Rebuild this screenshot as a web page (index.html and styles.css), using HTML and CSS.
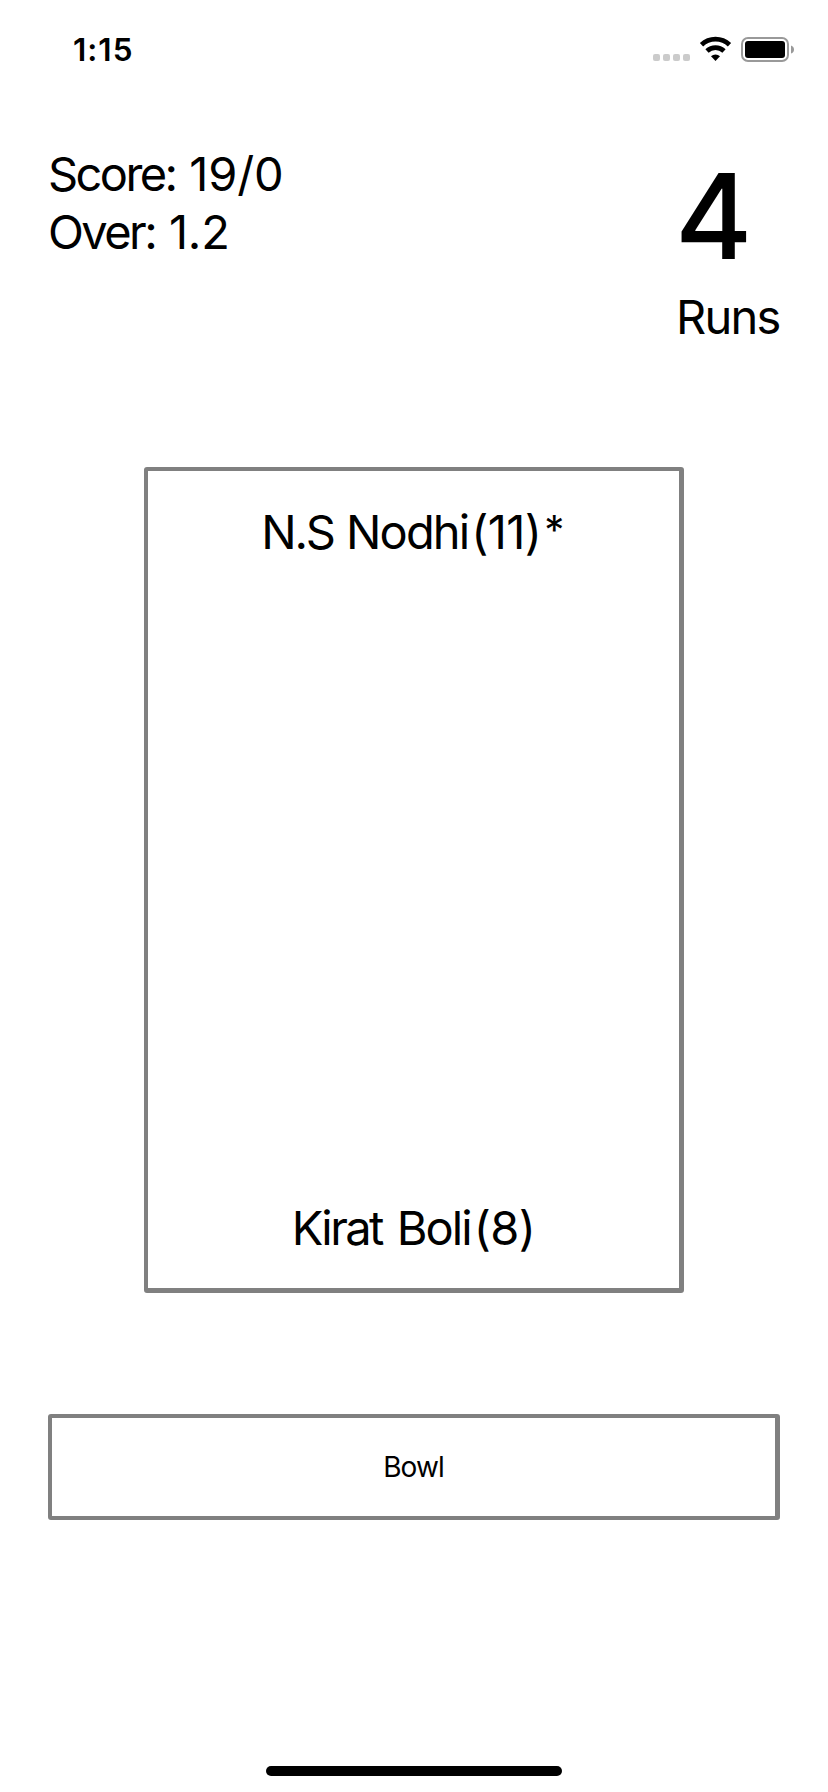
FILE: index.html
```html
<!DOCTYPE html>
<html lang="en">
<head>
<meta charset="utf-8">
<title>Cricket</title>
<link rel="stylesheet" href="styles.css">
</head>
<body>
<div class="screen">
  <header class="status">
    <span class="time">1:15</span>
    <svg class="indicators" width="144" height="32" viewBox="0 0 144 32">
      <g fill="#cbcbcb"><rect x="1" y="20" width="7" height="7" rx="2"/><rect x="11" y="20" width="7" height="7" rx="2"/><rect x="21" y="20" width="7" height="7" rx="2"/><rect x="31" y="20" width="7" height="7" rx="2"/></g>
      <path d="M49.500 10.700a20.500 20.500 0 0 1 28 0M55 17a12.500 12.500 0 0 1 17 0" fill="none" stroke="#000" stroke-width="4.800"/>
      <path d="M59 22.300a6.500 6.500 0 0 1 9 0L63.500 27z"/>
      <rect x="90" y="4" width="46" height="23" rx="6" fill="none" stroke="#999" stroke-width="2"/>
      <rect x="93" y="7" width="40" height="17" rx="3"/>
      <path d="M139 11.500q3 1 3 4t-3 4z" fill="#999"/>
    </svg>
  </header>
  <main class="game">
    <section class="summary">
      <div class="score"><div class="line"><span class="label">Score:</span> <span class="value">19/0</span></div><div class="line"><span class="label">Over:</span> <span class="value">1.2</span></div></div>
      <div class="result"><div class="number">4</div><div class="runs">Runs</div></div>
    </section>
    <section class="pitch"><div class="striker"><span class="first">N.S</span> Nodhi<span class="tally">(11)<span class="mark">*</span></span></div><div class="partner"><span class="first">Kirat</span> Boli<span class="tally">(8)</span></div></section>
    <button class="bowl"><span>Bowl</span></button>
  </main>
  <div class="home"></div>
</div>
</body>
</html>
```
FILE: styles.css
```css
* { box-sizing: border-box; }
body { margin: 0; background: #fff; color: #000; font-family: Inter, sans-serif; }
.screen { height: 1792px; display: flex; flex-direction: column; }
.status { height: 100px; display: flex; justify-content: space-between; padding: 34px 32px 0 73px; }
.time { font-size: 31.5px; line-height: 32px; font-weight: 600; letter-spacing: 1px; }
.game { flex: 1; padding: 45px 48px 0; display: flex; flex-direction: column; }
.summary { height: 322px; display: flex; justify-content: space-between; }
.line { font-size: 47px; line-height: 58px; letter-spacing: -1.6px; word-spacing: 2.2px; }
.label { letter-spacing: -2.6px; }
.value { letter-spacing: -.2px; }
.result { width: 104px; }
.number { font-size: 118px; font-weight: 500; line-height: 143px; margin-left: -1px; }
.runs { font-size: 47px; line-height: 58px; letter-spacing: -1.8px; white-space: nowrap; }
.pitch { width: 540px; height: 826px; align-self: center; border: 4px solid #808080; border-right-width: 5px; border-bottom-width: 5px; border-radius: 3px; padding: 32px 0 31px; display: flex; flex-direction: column; justify-content: space-between; align-items: center; font-size: 47px; line-height: 58px; letter-spacing: -1.9px; }
.partner { word-spacing: 3.5px; }
.striker { word-spacing: 1px; margin-right: 2px; }
.tally { letter-spacing: -.6px; margin-left: 3px; }
.mark { font-size: 40px; line-height: 0; vertical-align: 5px; margin-left: 3px; }
.first { letter-spacing: -2.6px; }
.striker .first { letter-spacing: -2.2px; }
.bowl { width: 732px; height: 106px; margin-top: 121px; border: 4px solid #808080; border-right-width: 5px; border-radius: 3px; padding: 0; background: #fff; color: #000; font: 28px Inter, sans-serif; letter-spacing: -.9px; }
.home { width: 296px; height: 10px; border-radius: 5px; background: #000; align-self: center; margin-bottom: 16px; }
```
